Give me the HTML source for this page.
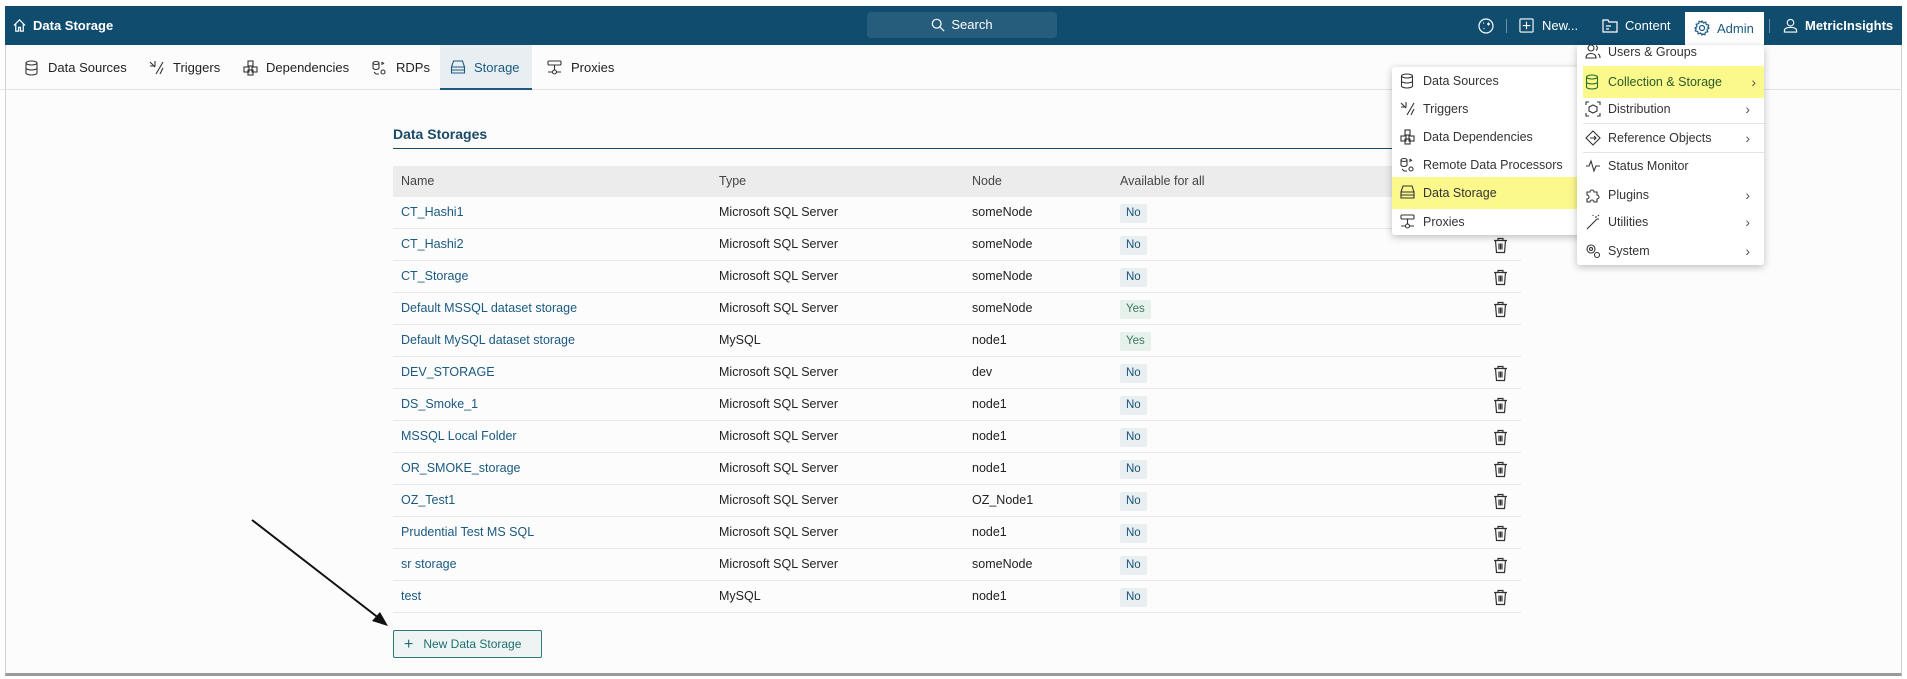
<!DOCTYPE html>
<html><head><meta charset="utf-8">
<style>
*{box-sizing:border-box;margin:0;padding:0}
body{width:1907px;height:679px;background:#fff;font-family:"Liberation Sans",sans-serif;position:relative;overflow:hidden;color:#222}
.abs{position:absolute}
.frame{position:absolute;left:5px;top:6px;width:1897px;height:670px;border:1px solid #d0d0d0;border-bottom:3px solid #9a9a9a;background:#fcfcfc}
.hdr{position:absolute;left:5px;top:6px;width:1897px;height:39px;background:#0f4c6e;color:#fff}
.hdr .t{position:absolute;top:0;line-height:39px;font-size:13px;font-weight:bold}
.search{position:absolute;left:862px;top:6px;width:190px;height:26px;background:#265d7c;border-radius:4px;color:#fff;font-size:13px;line-height:26px;text-align:center}
.tabs{position:absolute;left:0;top:45px;width:1902px;height:45px;border-bottom:1px solid #e2e2e2}
.tab{position:absolute;top:0;height:45px;line-height:45px;font-size:13px;color:#222;white-space:nowrap}
.title{position:absolute;left:393px;top:126px;font-size:14px;font-weight:bold;color:#1a4a66}
.uline{position:absolute;left:393px;top:148px;width:1128px;height:1px;background:#1a4a66}
.thead{position:absolute;left:393px;top:166px;width:1128px;height:31px;background:#ececec;font-size:12.5px;color:#444}
.row{position:absolute;left:393px;width:1128px;height:32px;border-bottom:1px solid #e8e8e8;font-size:12.5px}
.c{position:absolute;top:0;line-height:31px;white-space:nowrap}
.nm{color:#1a5a80}
.bdg{position:absolute;left:727px;top:7px;height:19px;line-height:19px;padding:0 6px;font-size:11.5px;background:#e8eef2;color:#1a5276;border-radius:2px}
.yes{background:#e6f1ec;color:#3a7a60}
.trash{position:absolute;left:1100px;top:8px}
.btn{position:absolute;left:393px;top:630px;width:149px;height:28px;border:1px solid #2f7a78;background:#eef3f3;border-radius:2px;color:#1e6e6e;font-size:12px;line-height:26px}
.menu{position:absolute;background:#fff;box-shadow:0 2px 8px rgba(0,0,0,.25);border-radius:3px}
.mi{position:absolute;left:0;height:28px;line-height:28px;font-size:12.5px;color:#333;white-space:nowrap}
.mi svg{position:absolute;left:8px;top:6px}
.mi .tx{position:absolute;left:31px}
.hl{background:#fbf98c}
.arr{position:absolute;right:14px;font-size:14px;color:#555}
</style></head><body>
<div class="frame"></div>
<div class="hdr">
 <svg class="abs" style="left:7px;top:12px" width="15" height="15" viewBox="0 0 16 16" fill="none" stroke="#fff" stroke-width="1.3"><path d="M2 8L8 2l6 6M4 6.5V14h3v-4h2v4h3V6.5"/></svg>
 <div class="t" style="left:28px">Data Storage</div>
 <div class="search"><svg style="vertical-align:-3px;margin-right:6px" width="14" height="14" viewBox="0 0 16 16" fill="none" stroke="#fff" stroke-width="1.4"><circle cx="6.5" cy="6.5" r="5"/><path d="M10 10l5 5"/></svg>Search</div>
 <svg class="abs" style="left:1473px;top:12px" width="16" height="16" viewBox="0 0 16 16" fill="none" stroke="#fff" stroke-width="1.2"><circle cx="8" cy="8" r="7"/><path d="M9 6h3M10.5 4.5v3M5 5h1M5.5 10.5h1"/></svg>
 <div class="abs" style="left:1501px;top:13px;width:1px;height:14px;background:#6b8fa5"></div>
 <svg class="abs" style="left:1514px;top:12px" width="15" height="15" viewBox="0 0 16 16" fill="none" stroke="#fff" stroke-width="1.2"><rect x="1" y="1" width="14" height="14" rx="1"/><path d="M8 4v8M4 8h8"/></svg>
 <div class="t" style="left:1537px;font-weight:normal">New...</div>
 <svg class="abs" style="left:1597px;top:12px" width="16" height="15" viewBox="0 0 16 15" fill="none" stroke="#fff" stroke-width="1.2"><path d="M1 2h5l1 2h8v10H1z M4 8h5M4 11h3"/></svg>
 <div class="t" style="left:1620px;font-weight:normal">Content</div>
 <div class="abs" style="left:1680px;top:6px;width:79px;height:33px;background:#fff"></div>
 <svg class="abs" style="left:1689px;top:14px" width="16" height="16" viewBox="0 0 16 16" fill="none" stroke="#1a5a80" stroke-width="1.2"><circle cx="8" cy="8" r="2.5"/><path d="M8 1l1.5 2 2.3-.8.5 2.4 2.4.5-.8 2.3L15 8l-2 1.5.8 2.3-2.4.5-.5 2.4-2.3-.8L8 15l-1.5-2-2.3.8-.5-2.4-2.4-.5.8-2.3L1 8l2-1.5-.8-2.3 2.4-.5.5-2.4 2.3.8z"/></svg>
 <div class="t" style="left:1712px;color:#1a5a80;font-weight:normal;top:3px">Admin</div>
 <div class="abs" style="left:1764px;top:13px;width:1px;height:14px;background:#6b8fa5"></div>
 <svg class="abs" style="left:1778px;top:12px" width="15" height="15" viewBox="0 0 16 16" fill="none" stroke="#fff" stroke-width="1.2"><circle cx="8" cy="5" r="3.5"/><path d="M1.5 15v-1.5c0-2 2-3.5 6.5-3.5s6.5 1.5 6.5 3.5V15z"/></svg>
 <div class="t" style="left:1800px">MetricInsights</div>
</div>
<div class="tabs">
 <svg class="abs" style="left:25px;top:15px" width="13" height="16" viewBox="0 0 13 16" fill="none" stroke="#333" stroke-width="1.1"><ellipse cx="6.5" cy="3" rx="5.5" ry="2"/><path d="M1 3v10c0 1.1 2.5 2 5.5 2s5.5-.9 5.5-2V3M1 8c0 1.1 2.5 2 5.5 2s5.5-.9 5.5-2"/></svg>
 <div class="tab" style="left:48px">Data Sources</div>
 <svg class="abs" style="left:149px;top:15px" width="15" height="16" viewBox="0 0 15 16" fill="none" stroke="#333" stroke-width="1.1"><path d="M1 2l5 5M1 6h5V1M7 14l7-12M11 14l3-6"/></svg>
 <div class="tab" style="left:173px">Triggers</div>
 <svg class="abs" style="left:243px;top:15px" width="15" height="16" viewBox="0 0 15 16" fill="none" stroke="#333" stroke-width="1.1"><rect x="5" y="1" width="5" height="5"/><rect x="1" y="7" width="5" height="5"/><rect x="9" y="7" width="5" height="5"/><rect x="5" y="10" width="5" height="5"/></svg>
 <div class="tab" style="left:266px">Dependencies</div>
 <svg class="abs" style="left:372px;top:15px" width="15" height="16" viewBox="0 0 15 16" fill="none" stroke="#333" stroke-width="1.1"><ellipse cx="4" cy="3" rx="3" ry="1.5"/><path d="M1 3v5c0 .8 1.3 1.5 3 1.5s3-.7 3-1.5V3M10 2l2 2M10 2v3M2 12l2 2h3"/><circle cx="11" cy="12" r="2"/></svg>
 <div class="tab" style="left:396px">RDPs</div>
 <div class="abs" style="left:440px;top:0;width:92px;height:45px;background:#e8eef2;border-bottom:2px solid #1a5a80"></div>
 <svg class="abs" style="left:450px;top:15px" width="16" height="15" viewBox="0 0 15 15" fill="none" stroke="#1a5a80" stroke-width="1.1"><path d="M3 1h9l2 6v6H1V7z M1 7h13M1 10h13"/></svg>
 <div class="tab" style="left:474px;color:#1a5a80">Storage</div>
 <svg class="abs" style="left:547px;top:15px" width="15" height="15" viewBox="0 0 15 15" fill="none" stroke="#333" stroke-width="1.1"><rect x="1" y="1" width="13" height="4" rx="1"/><path d="M7.5 5v5M1 12h4M10 12h4"/><circle cx="7.5" cy="12" r="2"/></svg>
 <div class="tab" style="left:571px">Proxies</div>
</div>

<div class="title">Data Storages</div>
<div class="uline"></div>
<div class="thead"><div class="c" style="left:8px">Name</div><div class="c" style="left:326px">Type</div><div class="c" style="left:579px">Node</div><div class="c" style="left:727px">Available for all</div></div>

<div id="rows"></div>
<script>
var d=[["CT_Hashi1","Microsoft SQL Server","someNode","No",1],["CT_Hashi2","Microsoft SQL Server","someNode","No",1],["CT_Storage","Microsoft SQL Server","someNode","No",1],["Default MSSQL dataset storage","Microsoft SQL Server","someNode","Yes",1],["Default MySQL dataset storage","MySQL","node1","Yes",0],["DEV_STORAGE","Microsoft SQL Server","dev","No",1],["DS_Smoke_1","Microsoft SQL Server","node1","No",1],["MSSQL Local Folder","Microsoft SQL Server","node1","No",1],["OR_SMOKE_storage","Microsoft SQL Server","node1","No",1],["OZ_Test1","Microsoft SQL Server","OZ_Node1","No",1],["Prudential Test MS SQL","Microsoft SQL Server","node1","No",1],["sr storage","Microsoft SQL Server","someNode","No",1],["test","MySQL","node1","No",1]];
var tr='<svg class="trash" width="15" height="17" viewBox="0 0 15 17" fill="none" stroke="#333" stroke-width="1.2"><path d="M1 3.5h13M5 3.5V1.5h5v2M2.5 3.5l1 12h8l1-12M6 6.5v6M7.5 6.5v6M9 6.5v6"/></svg>';
var h='';d.forEach(function(r,i){h+='<div class="row" style="top:'+(197+i*32)+'px"><div class="c nm" style="left:8px">'+r[0]+'</div><div class="c" style="left:326px">'+r[1]+'</div><div class="c" style="left:579px">'+r[2]+'</div><div class="bdg'+(r[3]=="Yes"?" yes":"")+'">'+r[3]+'</div>'+(r[4]?tr:'')+'</div>'});
document.getElementById('rows').innerHTML=h;
</script>
<div class="btn"><span style="margin-left:10px;font-size:16px;vertical-align:-1px">+</span><span style="margin-left:10px">New Data Storage</span></div>

<svg class="abs" style="left:0;top:0" width="1907" height="679"><line x1="252" y1="520" x2="380" y2="619" stroke="#111" stroke-width="2"/><polygon points="388,626 372,621 380,612" fill="#111"/></svg>

<div class="menu" style="left:1392px;top:67px;width:190px;height:168px">
 <div class="mi" style="top:0;width:190px"><svg width="14" height="16" viewBox="0 0 13 16" fill="none" stroke="#333" stroke-width="1.1"><ellipse cx="6.5" cy="3" rx="5.5" ry="2"/><path d="M1 3v10c0 1.1 2.5 2 5.5 2s5.5-.9 5.5-2V3M1 8c0 1.1 2.5 2 5.5 2s5.5-.9 5.5-2"/></svg><span class="tx">Data Sources</span></div>
 <div class="mi" style="top:28px;width:190px"><svg width="15" height="16" viewBox="0 0 15 16" fill="none" stroke="#333" stroke-width="1.1"><path d="M1 2l5 5M1 6h5V1M7 14l7-12M11 14l3-6"/></svg><span class="tx">Triggers</span></div>
 <div class="mi" style="top:56px;width:190px"><svg width="15" height="16" viewBox="0 0 15 16" fill="none" stroke="#333" stroke-width="1.1"><rect x="5" y="1" width="5" height="5"/><rect x="1" y="7" width="5" height="5"/><rect x="9" y="7" width="5" height="5"/><rect x="5" y="10" width="5" height="5"/></svg><span class="tx">Data Dependencies</span></div>
 <div class="mi" style="top:84px;width:190px"><svg width="15" height="16" viewBox="0 0 15 16" fill="none" stroke="#333" stroke-width="1.1"><ellipse cx="4" cy="3" rx="3" ry="1.5"/><path d="M1 3v5c0 .8 1.3 1.5 3 1.5s3-.7 3-1.5V3M10 2l2 2M10 2v3M2 12l2 2h3"/><circle cx="11" cy="12" r="2"/></svg><span class="tx">Remote Data Processors</span></div>
 <div class="mi hl" style="top:110px;height:32px;line-height:32px;width:190px"><svg style="top:8px" width="15" height="15" viewBox="0 0 15 15" fill="none" stroke="#333" stroke-width="1.1"><path d="M3 1h9l2 6v6H1V7z M1 7h13M1 10h13"/></svg><span class="tx">Data Storage</span></div>
 <div class="mi" style="top:141px;width:190px"><svg width="15" height="15" viewBox="0 0 15 15" fill="none" stroke="#333" stroke-width="1.1"><rect x="1" y="1" width="13" height="4" rx="1"/><path d="M7.5 5v5M1 12h4M10 12h4"/><circle cx="7.5" cy="12" r="2"/></svg><span class="tx">Proxies</span></div>
</div>

<div class="menu" style="left:1577px;top:45px;width:187px;height:220px">
 <div class="mi" style="top:-7px;width:187px"><svg width="16" height="15" viewBox="0 0 16 15" fill="none" stroke="#333" stroke-width="1.1"><circle cx="6" cy="4" r="3"/><path d="M1 14c0-3 2-4.5 5-4.5s5 1.5 5 4.5zM11 1.5a3 3 0 010 5M13 10c1.5.5 2 2 2 4"/></svg><span class="tx">Users &amp; Groups</span></div>
 <div class="mi hl" style="left:6px;top:21px;height:32px;line-height:32px;width:181px;color:#2a5a2a"><svg style="left:2px;top:8px" width="14" height="16" viewBox="0 0 13 16" fill="none" stroke="#2a6a2a" stroke-width="1.1"><ellipse cx="6.5" cy="3" rx="5.5" ry="2"/><path d="M1 3v10c0 1.1 2.5 2 5.5 2s5.5-.9 5.5-2V3M1 8c0 1.1 2.5 2 5.5 2s5.5-.9 5.5-2"/></svg><span class="tx" style="left:25px">Collection &amp; Storage</span><span class="arr" style="right:8px">›</span></div>
 <div class="mi" style="top:50px;width:187px"><svg width="16" height="16" viewBox="0 0 16 16" fill="none" stroke="#333" stroke-width="1.1"><path d="M1 4V1h3M12 1h3v3M1 12v3h3M15 12v3h-3M8 4l4 2v4l-4 2-4-2V6z"/></svg><span class="tx">Distribution</span><span class="arr">›</span></div>
 <div class="abs" style="left:6px;top:78px;width:181px;height:1px;background:#e4e4e4"></div>
 <div class="mi" style="top:79px;width:187px"><svg width="16" height="16" viewBox="0 0 16 16" fill="none" stroke="#333" stroke-width="1.1"><path d="M8 1l7 7-7 7-7-7z M5 8h6M9 6l2 2-2 2"/></svg><span class="tx">Reference Objects</span><span class="arr">›</span></div>
 <div class="abs" style="left:6px;top:107px;width:181px;height:1px;background:#e4e4e4"></div>
 <div class="mi" style="top:107px;width:187px"><svg width="16" height="16" viewBox="0 0 16 16" fill="none" stroke="#333" stroke-width="1.1"><path d="M1 8h3l2-5 3 10 2-5h4"/></svg><span class="tx">Status Monitor</span></div>
 <div class="mi" style="top:136px;width:187px"><svg width="16" height="16" viewBox="0 0 16 16" fill="none" stroke="#333" stroke-width="1.1"><path d="M2 5h3a2 2 0 114 0h3v3a2 2 0 110 4v3H9a2 2 0 10-4 0H2v-3a2 2 0 100-4z"/></svg><span class="tx">Plugins</span><span class="arr">›</span></div>
 <div class="mi" style="top:163px;width:187px"><svg width="16" height="16" viewBox="0 0 16 16" fill="none" stroke="#333" stroke-width="1.1"><path d="M2 15L12 5M11 2v2M14 5h-2M14 1l-1 1M8 1v1"/></svg><span class="tx">Utilities</span><span class="arr">›</span></div>
 <div class="mi" style="top:192px;width:187px"><svg width="16" height="16" viewBox="0 0 16 16" fill="none" stroke="#333" stroke-width="1.1"><circle cx="6" cy="6" r="4"/><circle cx="6" cy="6" r="1.5"/><circle cx="12" cy="12" r="2.5"/></svg><span class="tx">System</span><span class="arr">›</span></div>
</div>
</body></html>
